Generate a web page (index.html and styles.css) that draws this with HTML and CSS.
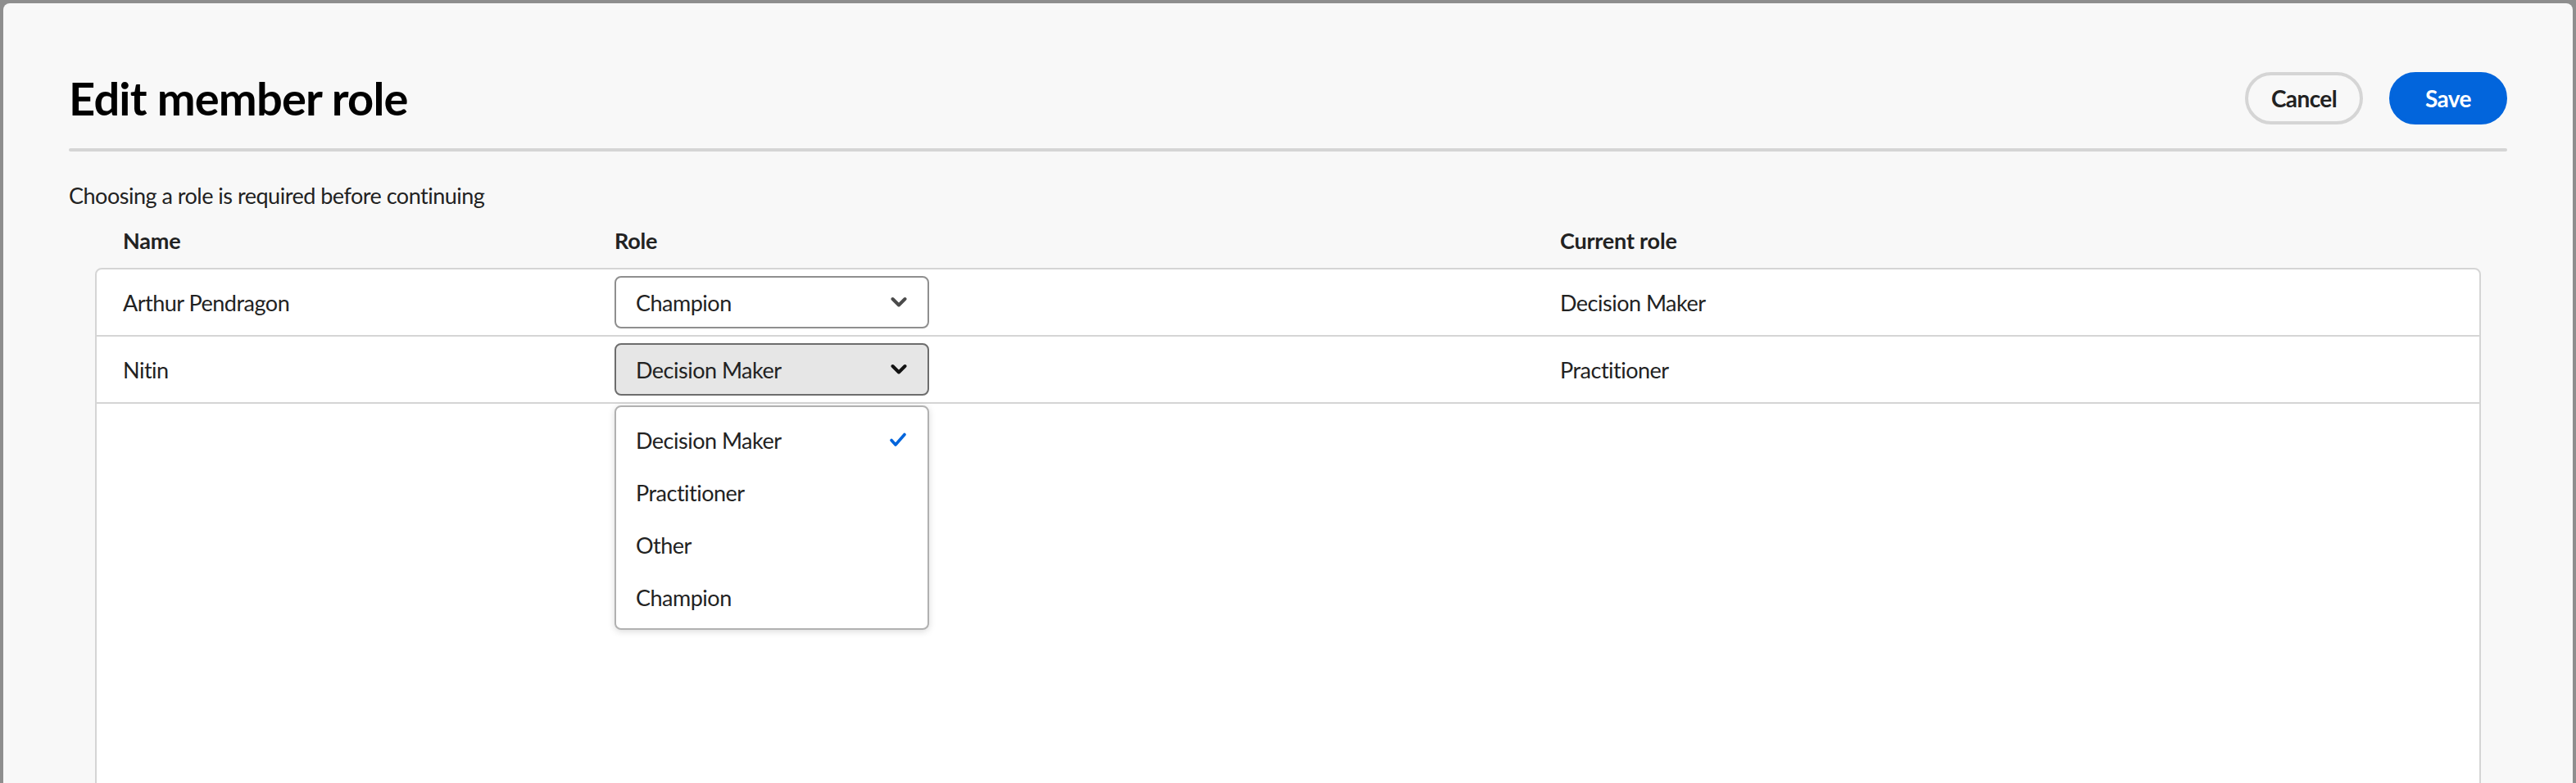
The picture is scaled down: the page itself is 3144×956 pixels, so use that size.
FILE: index.html
```html
<!DOCTYPE html>
<html lang="en">
<head>
<meta charset="utf-8">
<title>Edit member role</title>
<link rel="stylesheet" href="styles.css">
</head>
<body>
<div class="dialog">
  <div class="header">
    <h1 class="title">Edit member role</h1>
    <div class="actions">
      <button class="btn btn-secondary">Cancel</button>
      <button class="btn btn-primary">Save</button>
    </div>
  </div>
  <div class="divider"></div>
  <p class="desc">Choosing a role is required before continuing</p>
  <div class="table">
    <div class="cols thead">
      <div class="cell">Name</div>
      <div class="cell">Role</div>
      <div class="cell">Current role</div>
    </div>
    <div class="tbody">
      <div class="cols row">
        <div class="cell">Arthur Pendragon</div>
        <div class="cell">
          <div class="picker">
            <span class="picker-label">Champion</span>
            <svg class="chevron" width="20" height="14" viewBox="0 0 20 14"><polyline points="2.5,3 10,10.5 17.5,3" fill="none" stroke="#4b4b4b" stroke-width="4" stroke-linecap="round" stroke-linejoin="round"/></svg>
          </div>
        </div>
        <div class="cell">Decision Maker</div>
      </div>
      <div class="cols row">
        <div class="cell">Nitin</div>
        <div class="cell">
          <div class="picker open">
            <span class="picker-label">Decision Maker</span>
            <svg class="chevron" width="20" height="14" viewBox="0 0 20 14"><polyline points="2.5,3 10,10.5 17.5,3" fill="none" stroke="#131313" stroke-width="4" stroke-linecap="round" stroke-linejoin="round"/></svg>
            <div class="menu">
              <div class="item selected">
                <span class="item-label">Decision Maker</span>
                <svg class="check" width="22" height="18" viewBox="0 0 22 18"><polyline points="3,9.5 8,15 19,2.5" fill="none" stroke="#0265dc" stroke-width="3.6" stroke-linecap="round" stroke-linejoin="round"/></svg>
              </div>
              <div class="item"><span class="item-label">Practitioner</span></div>
              <div class="item"><span class="item-label">Other</span></div>
              <div class="item"><span class="item-label">Champion</span></div>
            </div>
          </div>
        </div>
        <div class="cell">Practitioner</div>
      </div>
    </div>
  </div>
</div>
</body>
</html>
```
FILE: styles.css
```css
* {
  box-sizing: border-box;
}

html,
body {
  margin: 0;
  height: 100%;
}

body {
  background: #8e8e8e;
  padding: 4px 4px 0;
  overflow: hidden;
  font-family: Lato, "Liberation Sans", Arial, sans-serif;
  color: #222222;
}

.dialog {
  background: #f8f8f8;
  border-radius: 8px 8px 0 0;
  padding: 80px 80px 0;
  height: 1100px;
  display: flex;
  flex-direction: column;
}

.header {
  display: flex;
  align-items: center;
  justify-content: space-between;
  height: 72px;
}

.title {
  margin: 0;
  font-size: 56px;
  line-height: 72px;
  font-weight: 700;
  letter-spacing: -0.8px;
  color: #000000;
}

.actions {
  display: flex;
  gap: 32px;
}

.btn {
  height: 64px;
  min-width: 144px;
  padding: 0 28px;
  border-radius: 32px;
  border: 4px solid #d5d5d5;
  background: transparent;
  font-family: Lato, "Liberation Sans", Arial, sans-serif;
  font-weight: 700;
  font-size: 28px;
  letter-spacing: -0.6px;
  line-height: 1;
  color: #222222;
}

.btn-primary {
  background: #0265dc;
  border-color: #0265dc;
  color: #ffffff;
}

.divider {
  margin-top: 25px;
  height: 4px;
  background: #d5d5d5;
  border-radius: 2px;
}

.desc {
  margin: 34px 0 0;
  font-size: 27px;
  letter-spacing: -0.5px;
  line-height: 40px;
}

.table {
  margin: 0 32px;
  flex: 1;
  display: flex;
  flex-direction: column;
}

.cols {
  display: grid;
  grid-template-columns: 600px 1fr 1fr;
  align-items: center;
}

.cell {
  padding-left: 32px;
  font-size: 27px;
  letter-spacing: -0.5px;
}

.thead {
  height: 68px;
  border-left: 2px solid transparent;
  border-right: 2px solid transparent;
  font-weight: 700;
}

.thead .cell {
  letter-spacing: -0.2px;
}

.tbody {
  flex: 1;
  background: #ffffff;
  border: 2px solid #d5d5d5;
  border-radius: 8px 8px 0 0;
}

.row {
  height: 82px;
  border-bottom: 2px solid #d5d5d5;
}

.picker {
  position: relative;
  width: 384px;
  height: 64px;
  border: 2px solid #8f8f8f;
  border-radius: 8px;
  background: #ffffff;
  display: flex;
  align-items: center;
  padding: 0 25px 0 24px;
}

.picker.open {
  background: #e6e6e6;
  border-color: #6d6d6d;
}

.picker-label {
  flex: 1;
}

.chevron {
  display: block;
}

.menu {
  position: absolute;
  top: calc(100% + 14px);
  left: -2px;
  width: 384px;
  background: #ffffff;
  border: 2px solid #b1b1b1;
  border-radius: 8px;
  padding: 8px 0 6px;
  box-shadow: 0 2px 8px rgba(0, 0, 0, 0.15);
  z-index: 2;
}

.item {
  height: 64px;
  display: flex;
  align-items: center;
  padding: 0 25px 0 24px;
}

.item-label {
  flex: 1;
}

.check {
  display: block;
}
```
